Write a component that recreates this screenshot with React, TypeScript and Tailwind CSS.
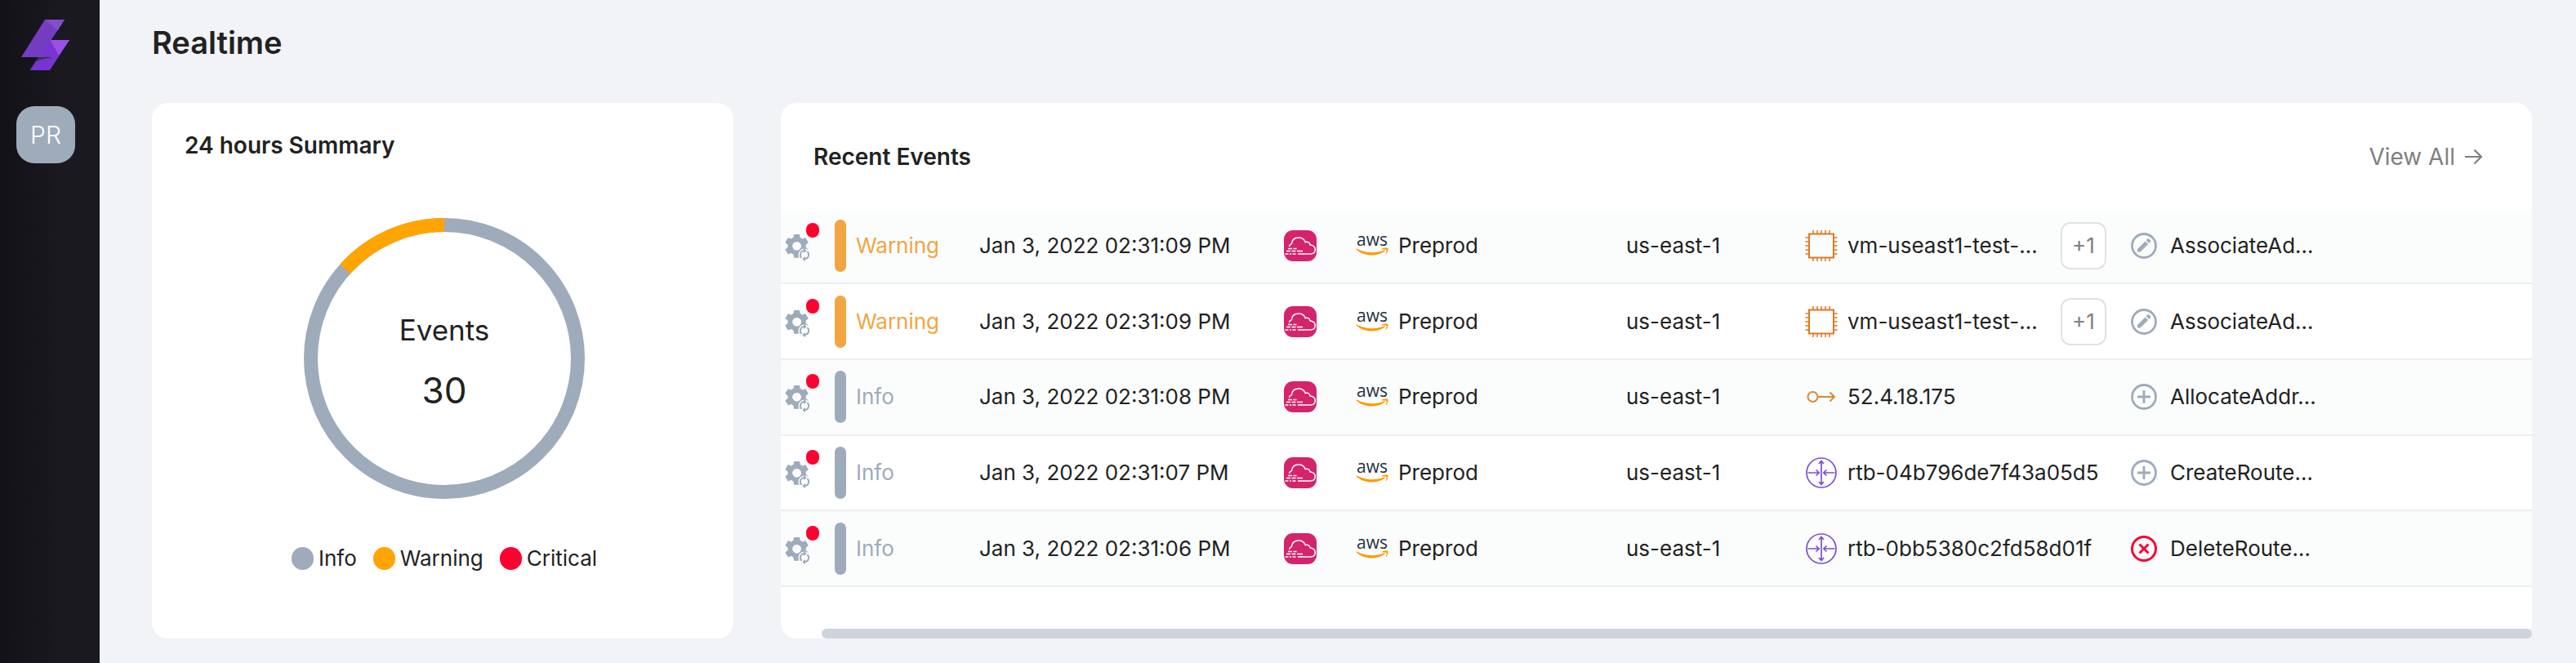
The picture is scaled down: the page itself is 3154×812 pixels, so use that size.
import type { ReactNode } from "react";

type Severity = "Warning" | "Info";
type Kind = "vm" | "ip" | "route";
type Action = "edit" | "add" | "remove";

interface EventRow {
  id: number;
  severity: Severity;
  time: string;
  account: string;
  region: string;
  kind: Kind;
  resource: string;
  more?: string;
  action: Action;
  name: string;
}

const events: EventRow[] = [
  { id: 1, severity: "Warning", time: "Jan 3, 2022 02:31:09 PM", account: "Preprod", region: "us-east-1", kind: "vm", resource: "vm-useast1-test-...", more: "+1", action: "edit", name: "AssociateAd..." },
  { id: 2, severity: "Warning", time: "Jan 3, 2022 02:31:09 PM", account: "Preprod", region: "us-east-1", kind: "vm", resource: "vm-useast1-test-...", more: "+1", action: "edit", name: "AssociateAd..." },
  { id: 3, severity: "Info", time: "Jan 3, 2022 02:31:08 PM", account: "Preprod", region: "us-east-1", kind: "ip", resource: "52.4.18.175", action: "add", name: "AllocateAddr..." },
  { id: 4, severity: "Info", time: "Jan 3, 2022 02:31:07 PM", account: "Preprod", region: "us-east-1", kind: "route", resource: "rtb-04b796de7f43a05d5", action: "add", name: "CreateRoute..." },
  { id: 5, severity: "Info", time: "Jan 3, 2022 02:31:06 PM", account: "Preprod", region: "us-east-1", kind: "route", resource: "rtb-0bb5380c2fd58d01f", action: "remove", name: "DeleteRoute..." },
];

const legend = [
  { label: "Info", dot: "bg-[#9eabbb]" },
  { label: "Warning", dot: "bg-[#ffa400]" },
  { label: "Critical", dot: "bg-[#ff0030]" },
];

function Logo() {
  return (
    <svg className="h-[62px] w-[60px]" viewBox="27 24 60 62" aria-hidden="true">
      <path d="M61.5 49H86L62 86H37.500l7.500-11z" fill="#7833d0" />
      <path d="M62.500 49H86L73 68z" fill="#9a50e8" />
      <path d="M48 70h18.500l-16 3-6.500 2.500z" fill="#33384a" />
      <path d="M56 24h24L50 70H27z" fill="#743cc0" />
      <path d="M56 24h24L71.500 37.500z" fill="#8250c4" />
    </svg>
  );
}

function GearSync() {
  return (
    <svg className="h-9 w-8" viewBox="0 0 32 36" aria-hidden="true">
      <mask id="gear-cut" maskUnits="userSpaceOnUse" x="0" y="0" width="32" height="36">
        <rect width="32" height="36" fill="#fff" />
        <circle cx="15.600" cy="16.300" r="5.400" fill="#000" />
        <circle cx="25" cy="27" r="7.600" fill="#000" />
      </mask>
      <g mask="url(#gear-cut)" fill="#9eabbb">
        <path
          transform="translate(-2.400 -1.700) scale(1.500)"
          d="M19.14,12.94c0.04-0.3,0.06-0.61,0.06-0.94c0-0.32-0.02-0.64-0.07-0.94l2.03-1.58c0.18-0.14,0.23-0.41,0.12-0.61l-1.92-3.32c-0.12-0.22-0.37-0.29-0.59-0.22l-2.39,0.96c-0.5-0.38-1.03-0.7-1.62-0.94L14.4,2.81c-0.04-0.24-0.24-0.41-0.48-0.41h-3.84c-0.24,0-0.43,0.17-0.47,0.41L9.25,5.35C8.66,5.59,8.12,5.92,7.63,6.29L5.24,5.33c-0.22-0.08-0.47,0-0.59,0.22L2.74,8.87C2.62,9.08,2.66,9.34,2.86,9.48l2.03,1.58C4.84,11.36,4.8,11.69,4.8,12s0.02,0.64,0.07,0.94l-2.03,1.58c-0.18,0.14-0.23,0.41-0.12,0.61l1.92,3.32c0.12,0.22,0.37,0.29,0.59,0.22l2.39-0.96c0.5,0.38,1.03,0.7,1.62,0.94l0.36,2.54c0.05,0.24,0.24,0.41,0.48,0.41h3.84c0.24,0,0.44-0.17,0.47-0.41l0.36-2.54c0.59-0.24,1.13-0.56,1.62-0.94l2.39,0.96c0.22,0.08,0.47,0,0.59-0.22l1.92-3.32c0.12-0.22,0.07-0.47-0.12-0.61L19.14,12.94z"
        />
        <circle cx="15.600" cy="16.300" r="8.500" fill="none" stroke="#9eabbb" strokeWidth="5" />
      </g>
      <g fill="none" stroke="#9eabbb" strokeWidth="1.900">
        <path d="M21.600 30.900A5.200 5.200 0 0 1 24.200 21.900" />
        <path d="M28.400 23.100A5.200 5.200 0 0 1 25.800 32.100" />
      </g>
      <path d="M24 18.800l3.800 3.100-3.800 3.100zM26 29v6.200l-3.800-3.100z" fill="#9eabbb" />
    </svg>
  );
}

function CloudTrailIcon() {
  return (
    <svg className="block size-10" viewBox="0 0 40 40" aria-hidden="true">
      <rect y="1" width="40" height="38" rx="11" fill="#d4246c" />
      <g fill="none" stroke="#fff" strokeWidth="1.500">
        <path d="M6.500 21c.3-2 1.500-3 3-3.500C10 12.500 13.500 10 18 10c4.500 0 7 2.500 8.200 5.500 2.500-1 5.300.3 5.800 3.300 4 .7 6.300 3 6.300 6 0 3.400-2.500 5.200-6 5.200H17" />
        <path d="M5 23.500h5m1.500 0h4M3 26.500h5m1.500 0h5m1.500 0h7M1.500 30h4m1.500 0h2m1.500 0h4" />
      </g>
    </svg>
  );
}

function AwsLogo() {
  return (
    <svg className="h-12 w-10" viewBox="0 -10 40 48" role="img" aria-label="AWS">
      <text x="20" y="14" textAnchor="middle" fontFamily="'Open Sans', sans-serif" fontWeight="500" fontSize="21" fill="#252f3e">
        aws
      </text>
      <g fill="#ff9900">
        <path d="M.6 17.800c.2-.4.700-.4 1.200-.1C11 23 24.500 23.600 34.500 19.400c1-.4 1.800.6.900 1.300C26 27.500 10 27.200.9 18.700c-.3-.3-.5-.6-.3-.9z" />
        <path d="M31.800 17.800c2.300-1.600 7-1.500 7.600-.7.600.8-.3 5.200-2.400 7-.4.3-.7.1-.5-.3.500-1.300 1.600-4.100 1.100-4.900-.6-.7-3.900-.4-5.400-.3-.5 0-.8-.5-.4-.8z" />
      </g>
    </svg>
  );
}

const kindIcons: Record<Kind, ReactNode> = {
  vm: (
    <svg className="size-10" viewBox="0 0 40 40" fill="none" stroke="#dd7a22" aria-hidden="true">
      <rect x="5" y="5.500" width="30" height="29" strokeWidth="2" />
      <path strokeWidth="1.500" d="M10 1v4.500M15 1v4.500M20 1v4.500M25 1v4.500M30 1v4.500M10 34.500V39M15 34.500V39M20 34.500V39M25 34.500V39M30 34.500V39M.5 10H5M.5 15H5M.5 20H5M.5 25H5M.5 30H5M35 10h4.500M35 15h4.500M35 20h4.500M35 25h4.500M35 30h4.500" />
    </svg>
  ),
  ip: (
    <svg className="size-10" viewBox="0 0 40 40" fill="none" stroke="#dd8833" strokeWidth="2" aria-hidden="true">
      <circle cx="9.500" cy="20" r="6" />
      <path d="M15.500 20H36M30.500 14.500L36 20l-5.500 5.500" />
    </svg>
  ),
  route: (
    <svg className="size-10" viewBox="0 0 40 40" fill="none" stroke="#7c4fd0" strokeWidth="1.700" aria-hidden="true">
      <circle cx="20" cy="20" r="18" />
      <path d="M20 5.500v29M17 9l3-3.500L23 9M17 31l3 3.500 3-3.500M3.500 20H17M13.500 16.500L17.200 20l-3.700 3.500M36.500 20H23M26.500 16.500L22.800 20l3.700 3.500" />
    </svg>
  ),
};

const actionIcons: Record<Action, ReactNode> = {
  edit: (
    <svg className="size-8" viewBox="0 0 32 32" aria-hidden="true">
      <circle cx="16" cy="16" r="14.500" fill="none" stroke="#9eabbb" strokeWidth="2.800" />
      <path d="M8 23.500v-3.600l9.600-9.500 3.600 3.600-9.600 9.500zM18.700 9.300l1.700-1.700c.5-.5 1.100-.5 1.600 0l2 2c.5.5.5 1.100 0 1.600l-1.700 1.700z" fill="#9eabbb" />
    </svg>
  ),
  add: (
    <svg className="size-8" viewBox="0 0 32 32" fill="none" stroke="#9eabbb" strokeWidth="2.800" aria-hidden="true">
      <circle cx="16" cy="16" r="14.500" />
      <path d="M16 8v16M8 16h16" />
    </svg>
  ),
  remove: (
    <svg className="size-8" viewBox="0 0 32 32" fill="none" stroke="#f90032" strokeWidth="3" aria-hidden="true">
      <circle cx="16" cy="16" r="14.500" />
      <path d="M10.500 10.500l11 11M21.500 10.500l-11 11" />
    </svg>
  ),
};

function Donut() {
  const r = 163.5;
  const length = 2 * Math.PI * r;
  const warning = (length * 4) / 30;
  return (
    <svg className="size-full" viewBox="0 0 344 344" fill="none" strokeWidth="17" aria-hidden="true">
      <circle cx="172" cy="172" r={r} stroke="#9eabbb" />
      <circle
        cx="172"
        cy="172"
        r={r}
        stroke="#ffa400"
        strokeDasharray={`${warning} ${length - warning}`}
        transform="rotate(-138 172 172)"
      />
    </svg>
  );
}

function SummaryCard() {
  return (
    <section className="flex flex-col items-center rounded-[20px] bg-white pt-8 pr-9 pl-10">
      <h2 className="self-start text-[28px] leading-10 font-semibold">24 hours Summary</h2>
      <div className="relative mt-[69px] size-[344px]">
        <Donut />
        <div className="absolute inset-0 flex flex-col items-center justify-center gap-5 pt-1">
          <span className="text-[35px] leading-[54px]">Events</span>
          <span className="text-[44px] leading-[54px]">30</span>
        </div>
      </div>
      <ul className="mt-[53px] flex gap-5">
        {legend.map((item) => (
          <li key={item.label} className="flex items-center gap-1.5 text-[26px] leading-10">
            <span className={`h-7 w-[27px] rounded-full ${item.dot}`} />
            {item.label}
          </li>
        ))}
      </ul>
    </section>
  );
}

function EventLine({ event }: { event: EventRow }) {
  const warning = event.severity === "Warning";
  return (
    <tr className="border-b-2 border-[#ededee] odd:bg-[#fbfdfc]">
      <td>
        <span className="relative ml-1 flex pt-1">
          <GearSync />
          <span className="absolute -top-2 left-[27px] h-[18px] w-4 rounded-full bg-[#ff0030]" />
        </span>
      </td>
      <td>
        <span className={`flex items-center gap-3 ${warning ? "text-[#f2a541]" : "text-[#9eabbb]"}`}>
          <span className="h-16 w-3.5 rounded-full bg-current" />
          {event.severity}
        </span>
      </td>
      <td>{event.time}</td>
      <td>
        <CloudTrailIcon />
      </td>
      <td>
        <span className="flex items-center gap-3">
          <AwsLogo />
          {event.account}
        </span>
      </td>
      <td>{event.region}</td>
      <td>
        <span className="flex items-center gap-3 whitespace-nowrap">
          {kindIcons[event.kind]}
          {event.resource}
          {event.more && (
            <button type="button" className="mr-[30px] ml-auto h-[58px] w-14 rounded-[12px] border-2 border-[#e2e2e4] bg-white text-[#808080]">
              {event.more}
            </button>
          )}
        </span>
      </td>
      <td>
        <span className="flex items-center gap-4">
          {actionIcons[event.action]}
          {event.name}
        </span>
      </td>
    </tr>
  );
}

function EventsCard() {
  return (
    <section className="flex flex-col rounded-[20px] bg-white">
      <header className="flex h-[130px] items-center justify-between pt-0.5 pr-[60px] pl-10">
        <h2 className="text-[28px] leading-10 font-semibold">Recent Events</h2>
        <a href="#events" className="flex items-center gap-2.5 text-[28px] leading-10 text-[#808080]">
          View All
          <svg className="size-6" viewBox="0 0 24 24" fill="none" stroke="currentColor" strokeWidth="2.200" aria-hidden="true">
            <path d="M2 12h20M13.500 3.500L22 12l-8.500 8.500" />
          </svg>
        </a>
      </header>
      <table className="h-[463px] w-full table-fixed border-collapse text-left text-[26px] leading-10">
        <colgroup>
          <col className="w-[66px]" />
          <col className="w-[177px]" />
          <col className="w-[373px]" />
          <col className="w-[88px]" />
          <col className="w-[331px]" />
          <col className="w-[219px]" />
          <col className="w-[399px]" />
          <col />
        </colgroup>
        <tbody>
          {events.map((event) => (
            <EventLine key={event.id} event={event} />
          ))}
        </tbody>
      </table>
      <div className="mt-auto ml-[50px] h-3 rounded-full bg-[#cfd3dc]" />
    </section>
  );
}

export default function App() {
  return (
    <div className="flex min-h-screen bg-[#f2f3f7] font-['Inter',sans-serif] text-[#222222]">
      <nav className="flex w-[122px] shrink-0 flex-col items-center bg-linear-to-r from-[#121116] to-[#1b1920] to-60% pt-6 pr-2.5">
        <Logo />
        <button type="button" className="mt-11 h-[70px] w-[72px] rounded-[22px] bg-[#9eabbb] text-[30px] font-light text-white">
          PR
        </button>
      </nav>
      <main className="flex min-w-0 flex-1 flex-col pt-7 pr-[54px] pb-[30px] pl-16">
        <h1 className="text-[38px] leading-12 font-semibold">Realtime</h1>
        <div className="mt-[50px] grid flex-1 grid-cols-[712fr_2144fr] gap-[58px]">
          <SummaryCard />
          <EventsCard />
        </div>
      </main>
    </div>
  );
}
